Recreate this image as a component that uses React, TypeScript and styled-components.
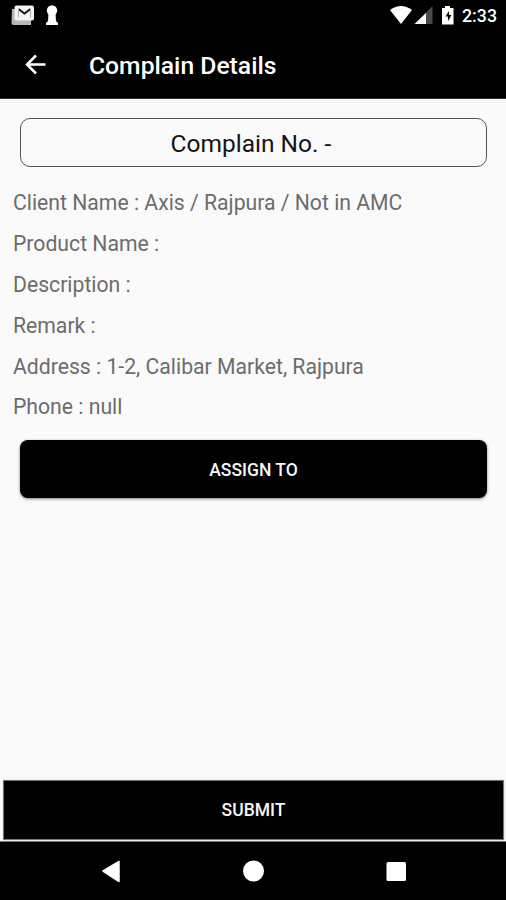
import React from "react";
import styled, { createGlobalStyle } from "styled-components";

const GlobalStyle = createGlobalStyle`
  * { box-sizing: border-box; }
  body { margin: 0; background: #fafafa; font-family: Roboto, sans-serif; }
`;

const Screen = styled.div`
  width: 506px;
  height: 900px;
  display: flex;
  flex-direction: column;
  background: #fafafa;
  overflow: hidden;
`;

const StatusBar = styled.header`
  height: 32px;
  flex: none;
  display: flex;
  justify-content: space-between;
  background: #000;
  color: #fff;
`;

const StatusGroup = styled.div`
  display: flex;
`;

const Clock = styled.span`
  width: 44px;
  font-size: 17.8px;
  font-weight: 500;
  line-height: 32px;
`;

const AppBar = styled.div`
  height: 67px;
  flex: none;
  display: flex;
  align-items: center;
  border-bottom: 1px solid #333;
  background: #000;
  color: #fff;
`;

const BackButton = styled.button`
  width: 89px;
  height: 66px;
  padding: 0 0 0 22px;
  border: 0;
  background: none;
  text-align: left;

  svg { display: block; }
`;

const Title = styled.h1`
  margin: 0;
  padding-top: 1px;
  font-size: 24.7px;
  font-weight: 500;
  line-height: 66px;
  white-space: nowrap;
`;

const Content = styled.main`
  flex: 1;
  display: flex;
  flex-direction: column;
  padding: 19px 0 1px;
`;

const NumberBox = styled.div`
  height: 49px;
  margin: 0 19px 0 20px;
  padding-right: 5px;
  border: 1px solid #555;
  border-radius: 10px;
  color: #151515;
  font-size: 24.5px;
  line-height: 50px;
  text-align: center;
`;

const Details = styled.div`
  display: flex;
  flex-direction: column;
  padding: 15.4px 13px 0;
`;

const Detail = styled.p`
  margin: 0;
  height: 40.8px;
  font-size: 21.2px;
  line-height: 41px;
  color: #6c6c6c;
  white-space: pre;
`;

const AssignButton = styled.button`
  height: 58px;
  margin: 12.8px 19px 0 20px;
  padding: 2px 0 0;
  border: 0;
  border-radius: 8px;
  background: #000;
  color: #f6f6f6;
  font: 500 17.5px Roboto, sans-serif;
  box-shadow: 0 1px 3px rgba(0, 0, 0, 0.5);
`;

const SubmitButton = styled.button`
  height: 60px;
  margin: auto 2px 0 3px;
  padding: 0;
  border: 1px solid #777;
  background: #000;
  color: #f6f6f6;
  font: 500 17.5px Roboto, sans-serif;
  box-shadow: 0 0 1px #aaa;
`;

const NavBar = styled.nav`
  height: 59px;
  flex: none;
  border-top: 1px solid #777;
  background: #000;

  svg { display: block; }
`;

const details = [
  "Client Name : Axis / Rajpura / Not in AMC",
  "Product Name :",
  "Description :",
  "Remark :",
  "Address : 1-2, Calibar Market, Rajpura",
  "Phone : null",
];

const NotificationIcons = () => (
  <svg width="70" height="32">
    <path d="M12 9h3v11h16v5H13.5q-2 0-2-2z" fill="#b8b8b8" />
    <rect x="14.5" y="5.5" width="19.5" height="15" rx="2" fill="#f4f4f4" />
    <path d="M18.500 9l6 4.500 6-4.500" fill="none" stroke="#111" strokeWidth="1.800" />
    <path d="M18.500 9v8.500M30.500 9v8.500" fill="none" stroke="#aaa" strokeWidth="1" />
    <circle cx="52" cy="10.5" r="5.2" fill="#fff" />
    <path d="M48.500 13h7l.5 8 2 2v2H46v-2l2-2z" fill="#fff" />
  </svg>
);

const SystemIcons = () => (
  <svg width="73" height="32">
    <path d="M1 10Q12 2 23 10L12 24z" fill="#fff" />
    <path d="M43.500 6v18H26z" fill="#4a4a4a" />
    <path d="M37 13v11H25.500z" fill="#fff" />
    <path d="M53 8h3V6h5v2h3.500v16.500H53z" fill="#fff" />
    <path d="M60 11l-3.500 5.500h2.500v4.500l3.500-6h-2.500z" fill="#000" />
  </svg>
);

export default function App() {
  return (
    <>
      <GlobalStyle />
      <Screen>
        <StatusBar>
          <StatusGroup>
            <NotificationIcons />
          </StatusGroup>
          <StatusGroup>
            <SystemIcons />
            <Clock>2:33</Clock>
          </StatusGroup>
        </StatusBar>
        <AppBar>
          <BackButton aria-label="Back">
            <svg width="26" height="26" viewBox="0 0 26 26">
              <path d="M23.500 12.500H5M14 3.500l-9 9 9 9" fill="none" stroke="#fff" strokeWidth="2.500" />
            </svg>
          </BackButton>
          <Title>Complain Details</Title>
        </AppBar>
        <Content>
          <NumberBox>Complain No. -</NumberBox>
          <Details>
            {details.map((text) => (
              <Detail key={text}>{text}</Detail>
            ))}
          </Details>
          <AssignButton>ASSIGN TO</AssignButton>
          <SubmitButton>SUBMIT</SubmitButton>
        </Content>
        <NavBar>
          <svg width="506" height="58">
            <path d="M103 29l16-9.500v20z" fill="#fff" stroke="#fff" strokeWidth="1.500" strokeLinejoin="round" />
            <circle cx="253.500" cy="29" r="10.500" fill="#fff" />
            <rect x="386.500" y="20" width="19.500" height="19" rx="1.500" fill="#fff" />
          </svg>
        </NavBar>
      </Screen>
    </>
  );
}
